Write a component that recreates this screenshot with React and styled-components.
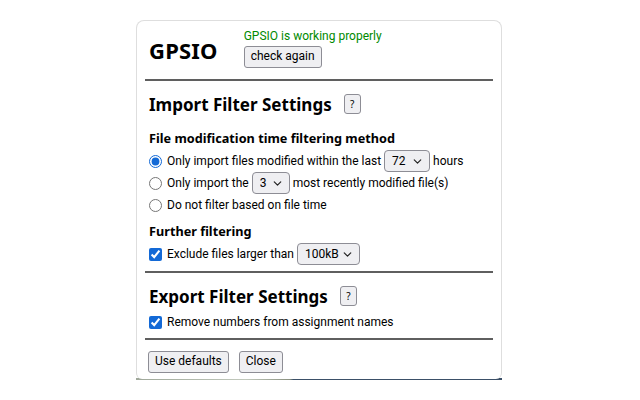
import React, { useState } from 'react'
import styled, { createGlobalStyle } from 'styled-components'
import { ChevronDown } from 'lucide-react'

const GlobalStyle = createGlobalStyle`
  body {
    margin: 0;
    background: #fff;
    font-family: Roboto, "Noto Sans", sans-serif;
    color: #000;
  }
`

const heading = `"Noto Sans", Roboto, sans-serif`

function App() {
  const [mode, setMode] = useState('hours')
  const [hours, setHours] = useState('72')
  const [count, setCount] = useState('3')
  const [size, setSize] = useState('100kB')
  const [exclude, setExclude] = useState(true)
  const [strip, setStrip] = useState(true)

  return (
    <>
      <GlobalStyle />
      <Page>
        <Popup>
          <Header>
            <Logo>GPSIO</Logo>
            <Status>
              <StatusText>GPSIO is working properly</StatusText>
              <Button>check again</Button>
            </Status>
          </Header>
          <Rule />

          <SectionTitle>
            Import Filter Settings
            <HelpButton>?</HelpButton>
          </SectionTitle>

          <Label>File modification time filtering method</Label>
          <Option>
            <Radio name="m" checked={mode === 'hours'} onChange={() => setMode('hours')} />
            Only import files modified within the last
            <Select value={hours} onChange={setHours} options={['24', '48', '72', '168']} width={46} />
            hours
          </Option>
          <Option>
            <Radio name="m" checked={mode === 'count'} onChange={() => setMode('count')} />
            Only import the
            <Select value={count} onChange={setCount} options={['1', '2', '3', '5', '10']} width={38} />
            most recently modified file(s)
          </Option>
          <Option>
            <Radio name="m" checked={mode === 'none'} onChange={() => setMode('none')} />
            Do not filter based on file time
          </Option>

          <Label $top={6}>Further filtering</Label>
          <Option>
            <Check checked={exclude} onChange={() => setExclude(!exclude)} />
            Exclude files larger than
            <Select value={size} onChange={setSize} options={['10kB', '100kB', '1MB']} width={63} />
          </Option>
          <Rule $top={6} />

          <SectionTitle>
            Export Filter Settings
            <HelpButton>?</HelpButton>
          </SectionTitle>
          <Option $top={4}>
            <Check checked={strip} onChange={() => setStrip(!strip)} />
            Remove numbers from assignment names
          </Option>
          <Rule $top={5} />

          <Footer>
            <Button>Use defaults</Button>
            <Button>Close</Button>
          </Footer>
        </Popup>
        <Backdrop />
      </Page>
    </>
  )
}

function Select({ value, onChange, options, width }) {
  return (
    <SelectWrap>
      <SelectBox value={value} onChange={(e) => onChange(e.target.value)} style={{ width }}>
        {options.map((o) => (<option key={o} value={o}>{o}</option>))}
      </SelectBox>
      <Chevron><ChevronDown size={13} strokeWidth={2.2} /></Chevron>
    </SelectWrap>
  )
}

export default App

const Page = styled.div`
  width: 366px;
  margin: 20px auto 0;
  position: relative;
  left: -1px;
`

const Popup = styled.div`
  background: #fff;
  border: 1px solid #dedede;
  border-bottom: none;
  border-radius: 8px 8px 6px 6px;
  padding: 6px 8px 0;
  font-size: 12px;
  position: relative;
  z-index: 1;
`

const Backdrop = styled.div`
  height: 2px;
  margin-top: -1px;
  background: linear-gradient(90deg, #9fa89a 0%, #c2c9bd 30%, #8a9180 42%, #3b5068 43%, #3b5068 100%);
`

const Header = styled.div`
  display: flex;
  align-items: flex-start;
  padding-left: 4px;
  height: 46px;
`

const Logo = styled.h1`
  font-family: ${heading};
  font-size: 22px;
  font-weight: 700;
  margin: 8px 26px 0 0;
  letter-spacing: 0.2px;
`

const Status = styled.div`
  display: flex;
  flex-direction: column;
  align-items: flex-start;
`

const StatusText = styled.span`
  color: #008a00;
  font-size: 12px;
  line-height: 16px;
  margin: 1px 0 0 0;
`

const Button = styled.button`
  font-family: inherit;
  font-size: 12px;
  color: #000;
  background: #efeff2;
  border: 1px solid #8d8d95;
  border-radius: 3px;
  padding: 1px 6px 2px;
  line-height: 17px;
  height: 22px;
  margin-top: 2px;
`

const HelpButton = styled(Button)`
  font-size: 10px;
  line-height: 16px;
  padding: 0;
  width: 17px;
  margin: 0 0 0 12px;
  height: 20px;
`

const Rule = styled.hr`
  border: none;
  border-top: 2px solid #5f5f5f;
  margin: ${(p) => p.$top ?? 6}px 0 0;
`

const SectionTitle = styled.h2`
  display: flex;
  align-items: center;
  font-family: ${heading};
  font-size: 17px;
  font-weight: 700;
  margin: 12px 0 0 4px;
  height: 22px;
`

const Label = styled.div`
  font-family: ${heading};
  font-size: 12.7px;
  font-weight: 700;
  margin: ${(p) => p.$top ?? 14}px 0 3px 4px;
  line-height: 18px;
`

const Option = styled.label`
  display: flex;
  align-items: center;
  gap: 3px;
  height: 22px;
  margin-top: ${(p) => p.$top ?? 0}px;
  padding-left: 4px;
  white-space: nowrap;
`

const Radio = styled.input.attrs({ type: 'radio' })`
  width: 13px;
  height: 13px;
  margin: 0 2px 0 0;
  accent-color: #1369d6;
`

const Check = styled.input.attrs({ type: 'checkbox' })`
  width: 13px;
  height: 13px;
  margin: 0 2px 0 0;
  accent-color: #1369d6;
`

const SelectWrap = styled.span`
  position: relative;
  display: inline-flex;
`

const SelectBox = styled.select`
  appearance: none;
  font-family: inherit;
  font-size: 12px;
  color: #000;
  height: 22px;
  background: #efeff2;
  border: 1px solid #8d8d95;
  border-radius: 4px;
  padding: 0 0 0 7px;
`

const Chevron = styled.span`
  position: absolute;
  right: 6px;
  top: 5px;
  pointer-events: none;
  display: flex;
  color: #222;
`

const Footer = styled.div`
  display: flex;
  align-items: flex-start;
  gap: 10px;
  padding: 9px 0 0 3px;
  height: 30px;
`
